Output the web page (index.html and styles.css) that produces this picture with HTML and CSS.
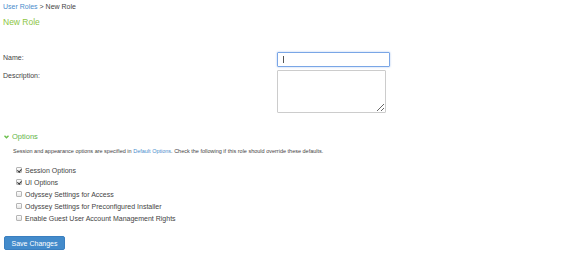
FILE: index.html
```html
<!DOCTYPE html>
<html>
<head>
	<title>New Role</title>
	<link rel="stylesheet" href="styles.css">
</head>
<body>
<div class="breadcrumb">
	<a href="#">User Roles</a> &gt; New Role
</div>
<h1 class="title">New Role</h1>

<div class="role_form">
	<label class="field_label">Name:</label>
	<div class="name_input"><span class="caret"></span></div>
	<label class="field_label">Description:</label>
	<textarea class="desc_input"></textarea>
</div>

<div class="options">
	<div class="options_head">
		<svg class="chevron" width="5" height="4" viewBox="0 0 10 8"><path d="M1 1.5 L5 5.5 L9 1.5" fill="none" stroke="#6abf4b" stroke-width="2.8"/></svg>
		<span>Options</span>
	</div>
	<p class="options_note">Session and appearance options are specified in <a href="#">Default Options</a>. Check the following if this role should override these defaults.</p>
	<ul class="option_list">
		<li><span class="box checked"></span>Session Options</li>
		<li><span class="box checked"></span>UI Options</li>
		<li><span class="box"></span>Odyssey Settings for Access</li>
		<li><span class="box"></span>Odyssey Settings for Preconfigured Installer</li>
		<li><span class="box"></span>Enable Guest User Account Management Rights</li>
	</ul>
</div>

<button class="save_btn">Save Changes</button>
</body>
</html>
```

FILE: styles.css
```css
body {
	margin: 0;
	padding: 0 3px;
	font-family: "Liberation Sans", Arial, sans-serif;
	color: #333;
	background: #fff;
}
a {
	color: #4a8ccc;
	text-decoration: none;
}
.breadcrumb {
	padding-top: 2px;
	font-size: 7px;
	line-height: 9px;
	color: #444;
}
.title {
	margin: 6px 0 0;
	font-size: 8.5px;
	line-height: 11px;
	font-weight: normal;
	color: #8dc63f;
}
.role_form {
	display: grid;
	grid-template-columns: 274px auto;
	grid-row-gap: 3px;
	align-items: start;
	margin-top: 24px;
}
.field_label {
	font-size: 7px;
	line-height: 9px;
	color: #444;
	padding-top: 1px;
}
.name_input {
	box-sizing: border-box;
	width: 113px;
	height: 15px;
	border: 1px solid #7aa6e6;
	border-radius: 1px;
	box-shadow: 0 0 2px rgba(102, 152, 230, 0.6);
	display: flex;
	align-items: center;
	padding-left: 5px;
}
.caret {
	width: 1px;
	height: 7px;
	background: #555;
}
.desc_input {
	box-sizing: border-box;
	width: 109px;
	height: 43px;
	margin: 0;
	border: 1px solid #ccc;
	border-radius: 1px;
	padding: 0;
	font-size: 7px;
}
.options {
	margin-top: 19px;
}
.options_head {
	display: flex;
	align-items: center;
	gap: 3px;
	padding-left: 1px;
	font-size: 7.5px;
	line-height: 10px;
	color: #5fb548;
}
.options_note {
	margin: 6px 0 0 10px;
	font-size: 5.5px;
	line-height: 7px;
	color: #444;
}
.option_list {
	list-style: none;
	margin: 9px 0 0 13px;
	padding: 0;
}
.option_list li {
	display: flex;
	align-items: center;
	height: 12px;
	font-size: 7px;
	color: #444;
}
.box {
	box-sizing: border-box;
	width: 6px;
	height: 6px;
	margin-right: 3px;
	border: 1px solid #b5b5b5;
	border-radius: 1px;
	background: linear-gradient(#fdfdfd, #e6e6e6);
	position: relative;
}
.box.checked::after {
	content: "";
	position: absolute;
	left: 1px;
	top: 0;
	width: 1.5px;
	height: 3px;
	border: solid #333;
	border-width: 0 1px 1px 0;
	transform: rotate(40deg);
}
.save_btn {
	display: block;
	margin: 12px 0 0 1px;
	width: 61px;
	height: 14px;
	padding: 0;
	border: 1px solid #3a7fc0;
	border-radius: 2px;
	background: #438bcb;
	color: #fff;
	font-family: "Liberation Sans", Arial, sans-serif;
	font-size: 7px;
}
```
